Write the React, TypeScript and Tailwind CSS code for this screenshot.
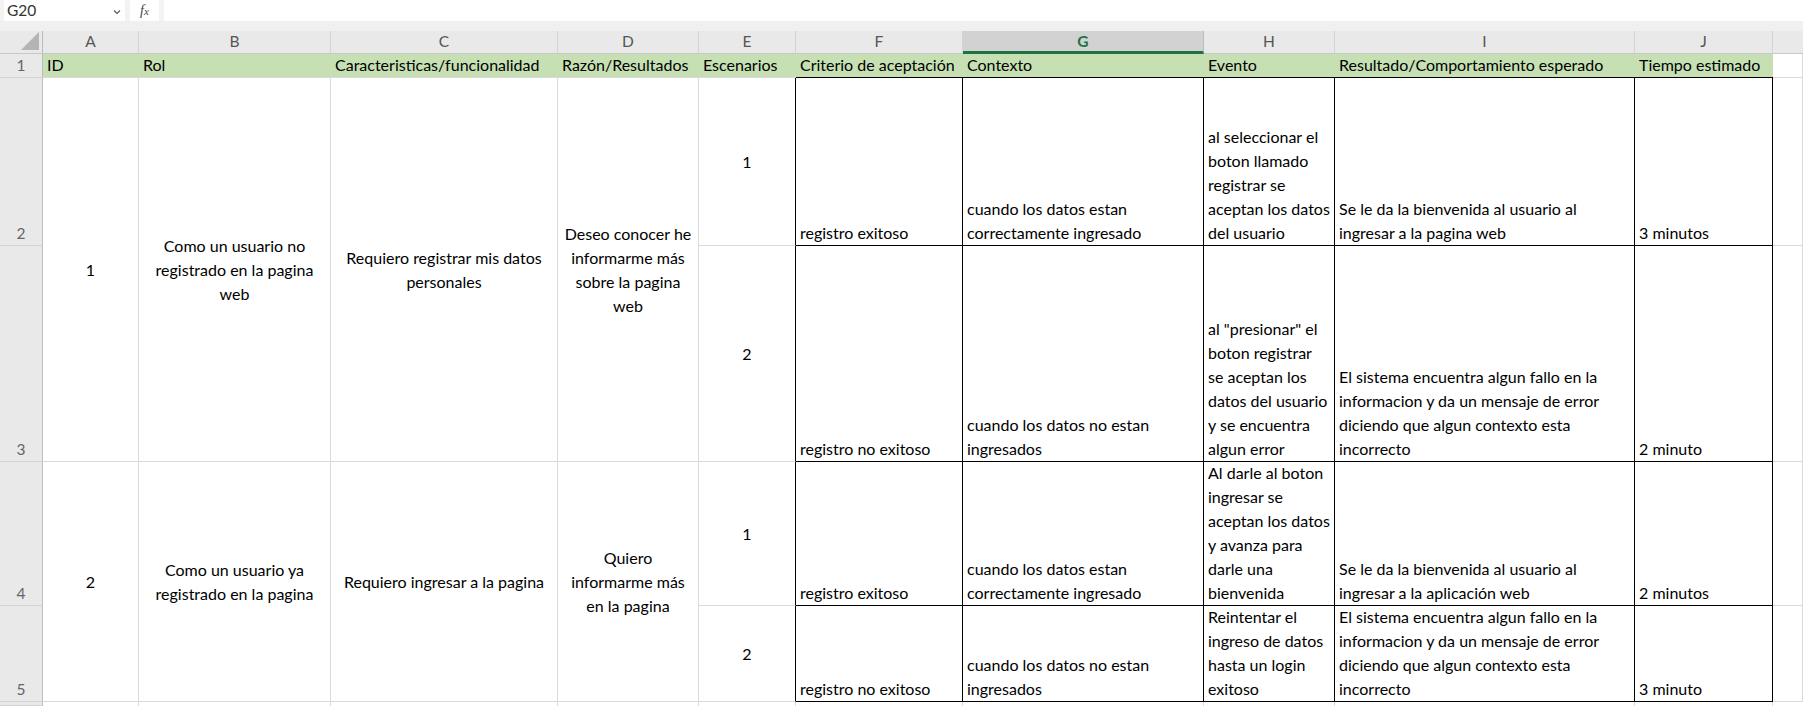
import React from "react";

type CellProps = {
  lines?: string[];
  className?: string;
  center?: boolean;
};

const GRID = "border-[#dadada]";

function Cell({ lines = [], className = "", center = false }: CellProps) {
  return (
    <div
      className={`flex flex-col overflow-hidden bg-white text-black ${
        center ? "items-center justify-center text-center" : "justify-end pl-[4px]"
      } ${className}`}
    >
      {lines.map((l, i) => (
        <div key={i} className="whitespace-nowrap leading-[24px]">
          {l}
        </div>
      ))}
    </div>
  );
}

function RowHead({ n }: { n?: number }) {
  return (
    <div className="flex items-end justify-center border-r border-b border-r-[#bdbdbd] border-b-[#d4d4d4] bg-[#e9e9e9] text-[15.5px] leading-[24px] text-[#666]">
      {n}
    </div>
  );
}

const letters = ["A", "B", "C", "D", "E", "F", "G", "H", "I", "J"];
const headers = [
  "ID",
  "Rol",
  "Caracteristicas/funcionalidad",
  "Razón/Resultados",
  "Escenarios",
  "Criterio de aceptación",
  "Contexto",
  "Evento",
  "Resultado/Comportamiento esperado",
  "Tiempo estimado",
];

type Detail = {
  f: string[];
  g: string[];
  h: string[];
  i: string[];
  j: string[];
};

const detail: Detail[] = [
  {
    f: ["registro exitoso"],
    g: ["cuando los datos estan", "correctamente ingresado"],
    h: ["al seleccionar el", "boton llamado", "registrar se", "aceptan los datos", "del usuario"],
    i: ["Se le da la bienvenida al usuario al", "ingresar a la pagina web"],
    j: ["3 minutos"],
  },
  {
    f: ["registro no exitoso"],
    g: ["cuando los datos no estan", "ingresados"],
    h: ["al \"presionar\" el", "boton registrar", "se aceptan los", "datos del usuario", "y se encuentra", "algun error"],
    i: [
      "El sistema encuentra algun fallo en la",
      "informacion y da un mensaje de error",
      "diciendo que algun contexto esta",
      "incorrecto",
    ],
    j: ["2 minuto"],
  },
  {
    f: ["registro exitoso"],
    g: ["cuando los datos estan", "correctamente ingresado"],
    h: ["Al darle al boton", "ingresar se", "aceptan los datos", "y avanza para", "darle una", "bienvenida"],
    i: ["Se le da la bienvenida al usuario al", "ingresar a la aplicación web"],
    j: ["2 minutos"],
  },
  {
    f: ["registro no exitoso"],
    g: ["cuando los datos no estan", "ingresados"],
    h: ["Reintentar el", "ingreso de datos", "hasta un login", "exitoso"],
    i: [
      "El sistema encuentra algun fallo en la",
      "informacion y da un mensaje de error",
      "diciendo que algun contexto esta",
      "incorrecto",
    ],
    j: ["3 minuto"],
  },
];

const stories = [
  {
    id: "1",
    rol: ["Como un usuario no", "registrado en la pagina", "web"],
    car: ["Requiero registrar mis datos", "personales"],
    raz: ["Deseo conocer he", "informarme más", "sobre la pagina", "web"],
  },
  {
    id: "2",
    rol: ["Como un usuario ya", "registrado en la pagina"],
    car: ["Requiero ingresar a la pagina"],
    raz: ["Quiero", "informarme más", "en la pagina"],
  },
];

function DetailRow({ d, rowNo, merged }: { d: Detail; rowNo: number; merged?: React.ReactNode }) {
  const scen = rowNo % 2 === 0 ? "1" : "2";
  return (
    <>
      <RowHead n={rowNo} />
      {merged}
      <Cell lines={[scen]} center className={`border-b border-r ${GRID} border-r-black`} />
      <Cell lines={d.f} className="border-b border-r border-black" />
      <Cell lines={d.g} className="border-b border-r border-black" />
      <Cell lines={d.h} className="border-b border-r border-black" />
      <Cell lines={d.i} className="border-b border-r border-black" />
      <Cell lines={d.j} className="border-b border-r border-black" />
      <div className={`border-b border-r ${GRID} bg-white`} />
    </>
  );
}

export default function App() {
  return (
    <div
      className="h-screen w-full overflow-hidden bg-white text-[16px]"
      style={{ fontFamily: "Lato, 'Open Sans', sans-serif" }}
    >
      {/* formula bar */}
      <div className="flex h-[21px] items-stretch gap-[5px] bg-[#f3f3f3] pl-[4px]">
        <div className="flex w-[121px] items-center justify-between bg-white pl-[3px] pr-[4px] text-[15.5px] text-[#333]">
          <span>G20</span>
          <svg width="8" height="6" viewBox="0 0 8 6" className="mt-[2px]">
            <path d="M1 1.5 L4 4.5 L7 1.5" fill="none" stroke="#555" strokeWidth="1.1" />
          </svg>
        </div>
        <div className="flex w-[29px] items-center justify-center bg-white">
          <span
            className="text-[14px] italic text-[#444]"
            style={{ fontFamily: "'Liberation Serif', serif" }}
          >
            f<span className="text-[11px]">x</span>
          </span>
        </div>
        <div className="flex-1 bg-white" />
      </div>
      <div className="h-[10px] bg-[#f0f0f0]" />

      {/* sheet */}
      <div className="grid h-[675px] grid-cols-[43px_96px_192px_227px_141px_97px_167px_241px_131px_300px_138px_1fr] grid-rows-[23px_24px_168px_216px_144px_96px_1fr]">
        {/* column header row */}
        <div className="relative border-r border-b border-r-[#bdbdbd] border-b-[#c8c8c8] bg-[#e9e9e9]">
          <svg width="19" height="19" viewBox="0 0 19 19" className="absolute left-[21px] top-[1px]">
            <polygon points="18,0 18,18 0,18" fill="#b4b4b4" />
          </svg>
        </div>
        {letters.map((l) =>
          l === "G" ? (
            <div
              key={l}
              className="flex items-center justify-center border-r border-r-[#bdbdbd] border-b-[3px] border-b-[#217346] bg-[#d2d2d2] pt-[2px] text-[15.5px] font-bold text-[#217346]"
            >
              {l}
            </div>
          ) : (
            <div
              key={l}
              className="flex items-center justify-center border-r border-b border-r-[#d4d4d4] border-b-[#c8c8c8] bg-[#e9e9e9] text-[15.5px] text-[#555]"
            >
              {l}
            </div>
          )
        )}
        <div className="border-b border-b-[#c8c8c8] bg-[#e9e9e9]" />

        {/* row 1 headers */}
        <RowHead n={1} />
        {headers.map((h, i) => (
          <Cell
            key={h}
            lines={[h]}
            className={`!bg-[#c6e0b4] border-b ${i >= 5 ? "border-b-black" : "border-b-[#dadada]"}`}
          />
        ))}
        <div className={`border-b border-r ${GRID} bg-white`} />

        {/* data rows */}
        {detail.map((d, k) => {
          const rowNo = k + 2;
          const s = stories[Math.floor(k / 2)];
          const merged =
            k % 2 === 0 ? (
              <>
                <Cell lines={[s.id]} center className={`row-span-2 border-b border-r ${GRID}`} />
                <Cell lines={s.rol} center className={`row-span-2 border-b border-r ${GRID}`} />
                <Cell lines={s.car} center className={`row-span-2 border-b border-r ${GRID}`} />
                <Cell lines={s.raz} center className={`row-span-2 border-b border-r ${GRID}`} />
              </>
            ) : null;
          return <DetailRow key={k} d={d} rowNo={rowNo} merged={merged} />;
        })}

        {/* row 6, only its top edge is in view */}
        <RowHead />
        {letters.map((l) => (
          <div key={l} className={`border-r ${GRID} bg-white`} />
        ))}
        <div className="bg-white" />
      </div>
    </div>
  );
}
